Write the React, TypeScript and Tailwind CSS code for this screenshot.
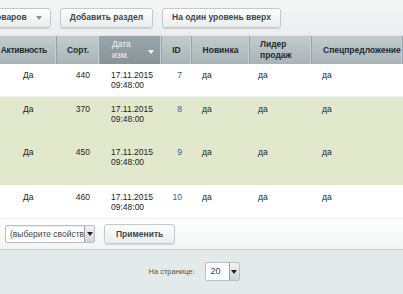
import React from "react";

const ROWS = [
  { act: "Да", sort: "440", id: "7", green: false, h: "h-[33px]", pt: "pt-[7px]" },
  { act: "Да", sort: "370", id: "8", green: true, h: "h-[44px]", pt: "pt-[8px]" },
  { act: "Да", sort: "450", id: "9", green: true, h: "h-[44px]", pt: "pt-[7px]" },
  { act: "Да", sort: "460", id: "10", green: false, h: "h-[34px]", pt: "pt-[8px]" },
];

const COLS = "grid grid-cols-[57px_43px_62px_30px_58px_62px_91px]";

function ToolButton({ children, className = "" }: { children: React.ReactNode; className?: string }) {
  return (
    <div
      className={`h-[20px] flex items-center rounded-[3px] border border-[#c4caca] bg-gradient-to-b from-[#ffffff] to-[#e9eded] shadow-[0_1px_1px_rgba(0,0,0,0.12)] text-[8.5px] font-bold text-[#3d4749] whitespace-nowrap ${className}`}
    >
      {children}
    </div>
  );
}

function Arrow({ color = "#3d4749" }: { color?: string }) {
  return (
    <svg width="6" height="4" viewBox="0 0 6 4">
      <path d="M0 0h6L3 4z" fill={color} />
    </svg>
  );
}

function HeadCell({ children, className = "" }: { children: React.ReactNode; className?: string }) {
  return (
    <div
      className={`h-full flex items-center overflow-hidden whitespace-nowrap border-r border-[#97a3a6] shadow-[inset_-1px_0_0_#c6cfd1] ${className}`}
    >
      {children}
    </div>
  );
}

export default function App() {
  return (
    <div className="w-[403px] h-[294px] overflow-hidden bg-white font-['Liberation_Sans',Arial,sans-serif] text-[#1d2426] flex flex-col">
      {/* toolbar */}
      <div className="h-[36px] shrink-0 flex items-center gap-[9px] bg-gradient-to-b from-[#f6f7f7] to-[#eaeeee] border-b border-[#dfe4e4] overflow-hidden">
        <ToolButton className="-ml-[52px] pl-[10px] pr-[8px] gap-[9px]">
          <span>Список товаров</span>
          <Arrow color="#8b9496" />
        </ToolButton>
        <ToolButton className="px-[9px]">Добавить раздел</ToolButton>
        <ToolButton className="px-[9px]">На один уровень вверх</ToolButton>
      </div>

      {/* header */}
      <div className={`${COLS} h-[28px] shrink-0 bg-gradient-to-b from-[#c3cccd] to-[#a9b4b6] text-[8.5px] font-bold text-[#222b2e] leading-[11px]`}>
        <HeadCell className="justify-end pr-[9px] tracking-[-0.3px]">Активность</HeadCell>
        <HeadCell className="justify-center">Сорт.</HeadCell>
        <HeadCell className="relative pl-[12px] bg-gradient-to-b from-[#9aa6a9] to-[#86939a] text-[#f1f4f5] font-normal">
          <span>
            Дата
            <br />
            изм.
          </span>
          <span className="absolute right-[7px] top-[14px]">
            <Arrow color="#f4f6f6" />
          </span>
        </HeadCell>
        <HeadCell className="justify-center">ID</HeadCell>
        <HeadCell className="justify-center">Новинка</HeadCell>
        <HeadCell className="pl-[10px]">
          <span>
            Лидер
            <br />
            продаж
          </span>
        </HeadCell>
        <HeadCell className="pl-[11px]">Спецпредложение</HeadCell>
      </div>

      {/* rows */}
      {ROWS.map((r) => (
        <div
          key={r.id}
          className={`${COLS} ${r.h} shrink-0 text-[8.5px] leading-[9.5px] border-b ${
            r.green ? "bg-[#e2e8cb] border-[#e2e8cb]" : "bg-white border-[#edf1f1]"
          }`}
        >
          <div className={`${r.pt} pl-[23px]`}>{r.act}</div>
          <div className={`${r.pt} text-right pr-[10px]`}>{r.sort}</div>
          <div className={`${r.pt} pl-[11px]`}>
            17.11.2015
            <br />
            09:48:00
          </div>
          <div className={`${r.pt} text-right pr-[10px] text-[#2a5fa8]`}>{r.id}</div>
          <div className={`${r.pt} pl-[10px]`}>да</div>
          <div className={`${r.pt} pl-[8px]`}>да</div>
          <div className={`${r.pt} pl-[10px]`}>да</div>
        </div>
      ))}

      {/* group actions */}
      <div className="h-[30px] shrink-0 flex items-center gap-[9px] pl-[5px] bg-gradient-to-b from-white to-[#f3f5f5]">
        <div className="w-[90px] h-[18px] flex items-stretch rounded-[2px] border border-[#b7bfc0] bg-white shadow-[inset_0_1px_1px_rgba(0,0,0,0.08)]">
          <div className="flex-1 flex items-center pl-[4px] text-[8.5px] text-[#3d4749] whitespace-nowrap overflow-hidden">
            (выберите свойств
          </div>
          <div className="w-[10px] flex items-center justify-center border-l border-[#9aa3a4] bg-gradient-to-b from-[#f3f4f4] to-[#cfd4d5]">
            <Arrow color="#222" />
          </div>
        </div>
        <ToolButton className="h-[18px] px-[11px]">Применить</ToolButton>
      </div>

      {/* pager */}
      <div className="flex-1 flex items-center justify-center gap-[10px] border-t border-[#c3cbcc] bg-[#e3eaea] pr-[15px] pb-[1px]">
        <span className="text-[7.5px] text-[#4a5456]">На странице:</span>
        <div className="w-[35px] h-[19px] flex items-stretch rounded-[2px] border border-[#b7bfc0] bg-white">
          <div className="flex-1 flex items-center pl-[5px] text-[9px] text-[#3d4749]">20</div>
          <div className="w-[10px] flex items-center justify-center border-l border-[#9aa3a4] bg-gradient-to-b from-[#f3f4f4] to-[#cfd4d5]">
            <Arrow color="#222" />
          </div>
        </div>
      </div>
    </div>
  );
}
